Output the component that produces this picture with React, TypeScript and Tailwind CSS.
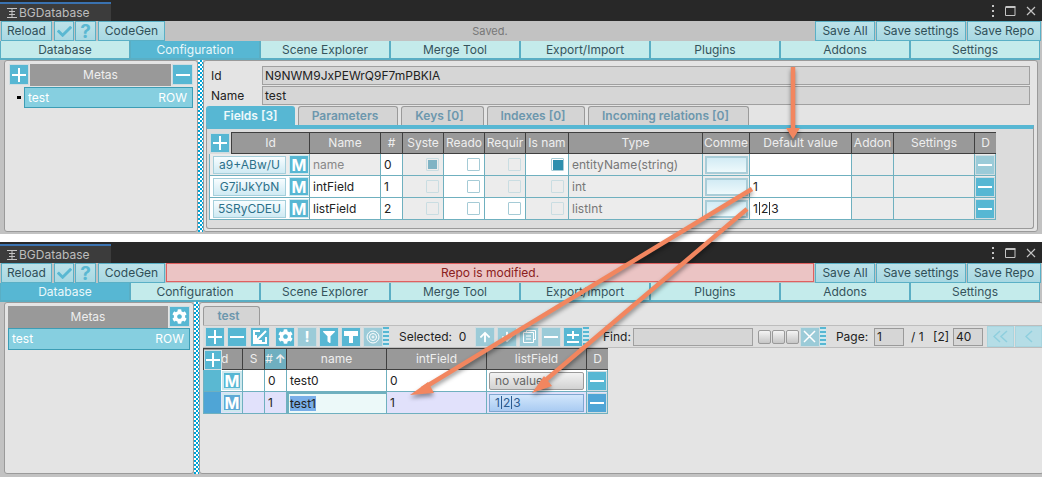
import type { ReactNode } from 'react';
import { FaCog, FaCheck, FaFilter, FaArrowUp, FaArrowDown } from 'react-icons/fa';

const mainTabs = ['Database', 'Configuration', 'Scene Explorer', 'Merge Tool', 'Export/Import', 'Plugins', 'Addons', 'Settings'];

function TitleBar() {
  return (
    <div className="h-[21px] bg-[#282828] flex justify-between shrink-0">
      <div className="w-[111px] mt-[2px] h-[19px] bg-[#3c3c3c] border-t-2 border-[#3a72b0] flex items-center pl-[6px] gap-[1px] text-[#bdbdbd] text-[12px]">
        <svg width="12" height="12" viewBox="0 0 12 12" fill="none" stroke="#c4c4c4" strokeWidth="1">
          <path d="M1 1.5h10M3 4.5h6M3 7.5h6M1 10.5h10M6 1.5v9" />
        </svg>
        <span>BGDatabase</span>
      </div>
      <div className="flex items-center pr-[6px] gap-[10px] pt-[1px]">
        <svg width="4" height="12" viewBox="0 0 4 12" fill="#c4c4c4"><path d="M1 0h2v2H1zM1 5h2v2H1zM1 10h2v2H1z" /></svg>
        <svg width="11" height="10" viewBox="0 0 11 10" fill="none" stroke="#c4c4c4"><path d="M.5 1.5h9.500v8h-9.500z" /><path d="M.5 1h10" strokeWidth="2" /></svg>
        <svg width="10" height="10" viewBox="0 0 10 10" stroke="#c4c4c4" strokeWidth="1.2"><path d="M1 1l8 8M9 1l-8 8" /></svg>
      </div>
    </div>
  );
}

function ToolBtn({ className, children }: { className: string; children: ReactNode }) {
  return (
    <div className={`h-[20px] shrink-0 border border-[#5ab0c6] bg-gradient-to-b from-[#bde2e9] to-[#a8d8e2] flex items-center justify-center text-[#2f4f58] ${className}`}>
      {children}
    </div>
  );
}

function TopBar({ children }: { children: ReactNode }) {
  return (
    <div className="h-[20px] bg-[#c2c2c2] flex shrink-0 pl-[1px] pr-[1px] gap-[1px]">
      <ToolBtn className="w-[51px]">Reload</ToolBtn>
      <ToolBtn className="w-[20px] ml-[1px]"><FaCheck size={15} color="#5ab8d2" /></ToolBtn>
      <ToolBtn className="w-[21px]"><span className="text-[#5ab8d2] font-bold text-[19px]">?</span></ToolBtn>
      <ToolBtn className="w-[67px] ml-[1px]">CodeGen</ToolBtn>
      {children}
      <ToolBtn className="w-[60px]">Save All</ToolBtn>
      <ToolBtn className="w-[90px]">Save settings</ToolBtn>
      <ToolBtn className="w-[74px]">Save Repo</ToolBtn>
    </div>
  );
}

function MainTabs({ active }: { active: number }) {
  return (
    <div className="h-[19px] bg-[#c2c2c2] flex shrink-0">
      {mainTabs.map((t, i) => (
        <div
          key={t}
          className={`w-[130px] h-[19px] pt-[1px] flex items-center justify-center border-x border-b-2 border-[#5aaec4] ${i === active ? 'bg-[#57b7d3] text-[#eaf7fa]' : 'bg-[#c4ebeb] text-[#35535c]'}`}
        >
          {t}
        </div>
      ))}
    </div>
  );
}

function Splitter() {
  return (
    <div className="w-[5px] shrink-0 bg-[repeating-conic-gradient(#00a3d6_0_25%,#ffffff_0_50%)] bg-[length:4px_4px]" />
  );
}

function Plus({ size = 14 }: { size?: number }) {
  return (
    <svg width={size} height={size} viewBox="0 0 14 14" fill="#fff"><path d="M6 0h2v6h6v2H8v6H6V8H0V6h6z" /></svg>
  );
}

function Minus() {
  return (
    <svg width="14" height="14" viewBox="0 0 14 14" fill="#fff"><path d="M0 6h14v2H0z" /></svg>
  );
}

function IconBtn({ className = '', dim = false, children }: { className?: string; dim?: boolean; children?: ReactNode }) {
  return (
    <div className={`shrink-0 border border-[#cfdde1] flex items-center justify-center ${dim ? 'bg-[#9bcbd8]' : 'bg-[#57b7d3]'} ${className}`}>
      {children}
    </div>
  );
}

function MBtn({ dim = false, thick = false }: { dim?: boolean; thick?: boolean }) {
  return (
    <div className={`w-[20px] h-[19px] shrink-0 border-[#cfe9ef] flex items-center justify-center text-white font-bold text-[16px] ${thick ? 'border-2' : 'border'} ${dim ? 'bg-[#5fa9d6]' : 'bg-[#57b7d3]'}`}>
      M
    </div>
  );
}

function Head({ className = '', children }: { className?: string; children?: ReactNode }) {
  return (
    <div className={`h-full shrink-0 bg-[#999999] border-r border-y border-[#3f3f3f] text-[#eeeeee] flex items-center justify-center overflow-hidden whitespace-nowrap ${className}`}>
      {children}
    </div>
  );
}

function Cell({ className = '', gray = false, children }: { className?: string; gray?: boolean; children?: ReactNode }) {
  return (
    <div className={`h-full shrink-0 border-r border-b border-[#6fb0bf] flex items-center ${gray ? 'bg-[#ececec]' : 'bg-white'} ${className}`}>
      {children}
    </div>
  );
}

function Check({ state = 'off' }: { state?: 'off' | 'dim' | 'on' | 'disabled' }) {
  const border = state === 'disabled' || state === 'dim' ? 'border-[#c9dde2]' : 'border-[#a5cbd6]';
  return (
    <div className={`w-[13px] h-[13px] border rounded-[1px] flex items-center justify-center ${border}`}>
      {state === 'dim' && <div className="w-[9px] h-[9px] bg-[#7fb3c4]" />}
      {state === 'on' && <div className="w-[10px] h-[10px] bg-[#2d8fae]" />}
    </div>
  );
}

function IdBtn({ children }: { children: ReactNode }) {
  return (
    <div className="w-[73px] h-[18px] ml-[3px] mr-[3px] shrink-0 border border-[#a5cfdb] bg-gradient-to-b from-[#f8fdff] to-[#cfeaf3] text-[#2c7089] flex items-center justify-center">
      {children}
    </div>
  );
}

function Comment() {
  return <div className="w-[43px] h-[18px] mx-auto border-2 border-[#a9cdd8] bg-gradient-to-b from-[#d2ebf4] to-[#eef9fb]" />;
}

type FieldRow = {
  id: string;
  name: string;
  n: number;
  type: string;
  def: ReactNode;
  system: 'dim' | 'disabled';
  required: 'disabled' | 'off';
  isName: 'on' | 'disabled';
};

const pipes = (color: string) => (
  <>1<span className={`mx-[1px] w-px h-[13px] inline-block align-middle ${color}`} />2<span className={`mx-[1px] w-px h-[13px] inline-block align-middle ${color}`} />3</>
);

const fieldRows: FieldRow[] = [
  { id: 'a9+ABw/U', name: 'name', n: 0, type: 'entityName(string)', def: '', system: 'dim', required: 'disabled', isName: 'on' },
  { id: 'G7jlJkYbN', name: 'intField', n: 1, type: 'int', def: '1', system: 'disabled', required: 'disabled', isName: 'disabled' },
  { id: '5SRyCDEU', name: 'listField', n: 2, type: 'listInt', def: pipes('bg-[#333333]'), system: 'disabled', required: 'off', isName: 'disabled' },
];

function FieldsTable() {
  return (
    <div className="ml-[2px] mt-[3px] w-[787px]">
      <div className="h-[22px] flex">
        <div className="w-[22px] h-full shrink-0 flex items-center justify-center">
          <IconBtn className="w-[20px] h-[20px]"><Plus /></IconBtn>
        </div>
        <Head className="w-[79px] border-l">Id</Head>
        <Head className="w-[71px]">Name</Head>
        <Head className="w-[22px]">#</Head>
        <Head className="w-[41px]">Syste</Head>
        <Head className="w-[41px]">Reado</Head>
        <Head className="w-[41px]">Requir</Head>
        <Head className="w-[43px]">Is nam</Head>
        <Head className="w-[134px]">Type</Head>
        <Head className="w-[47px]">Comme</Head>
        <Head className="w-[102px]">Default value</Head>
        <Head className="w-[42px]">Addon</Head>
        <Head className="w-[81px]">Settings</Head>
        <Head className="w-[21px] border-r-0">D</Head>
      </div>
      {fieldRows.map((r, i) => (
        <div key={r.id} className="h-[22px] flex text-[#222222]">
          <Cell className="w-[101px] border-l" gray={i === 0}>
            <IdBtn>{r.id}</IdBtn>
            <MBtn />
          </Cell>
          <Cell className={`w-[71px] pl-[3px] ${i === 0 ? 'text-[#888888]' : ''}`} gray={i === 0}>{r.name}</Cell>
          <Cell className="w-[22px] pl-[3px]">{r.n}</Cell>
          <Cell className="w-[41px] justify-end pr-[4px]" gray><Check state={r.system} /></Cell>
          <Cell className="w-[41px] justify-end pr-[4px]"><Check /></Cell>
          <Cell className="w-[41px] justify-end pr-[4px]" gray={r.required === 'disabled'}><Check state={r.required} /></Cell>
          <Cell className="w-[43px] justify-end pr-[4px]" gray={i > 0}><Check state={r.isName} /></Cell>
          <Cell className="w-[134px] pl-[3px] text-[#777777]" gray>{r.type}</Cell>
          <Cell className="w-[47px]" gray><Comment /></Cell>
          <Cell className="w-[102px] pl-[3px]">{r.def}</Cell>
          <Cell className="w-[42px]" gray />
          <Cell className="w-[81px]" gray />
          <Cell className="w-[21px] justify-center" gray>
            <IconBtn className="w-[20px] h-[20px]" dim={i === 0}><Minus /></IconBtn>
          </Cell>
        </div>
      ))}
    </div>
  );
}

function SubTab({ className, active = false, children }: { className: string; active?: boolean; children: ReactNode }) {
  return (
    <div className={`h-[19px] shrink-0 rounded-t-[3px] flex items-center justify-center font-semibold ${active ? 'bg-[#57b7d3] text-[#eef9fb]' : 'border border-[#9a9a9a] border-b-0 bg-[#d4d4d4] text-[#6c97ad] pr-[6px]'} ${className}`}>
      {children}
    </div>
  );
}

function ConfigWindow() {
  return (
    <div className="h-[234px] flex flex-col bg-[#c2c2c2]">
      <TitleBar />
      <TopBar>
        <div className="flex-1 flex items-center justify-center text-[#777777] text-[11px]">Saved.</div>
      </TopBar>
      <MainTabs active={1} />
      <div className="flex-1 flex pl-[4px] pb-[2px] min-h-0">
        <div className="w-[194px] shrink-0 bg-[#e4e4e4] border border-[#9a9a9a] rounded-[3px] px-[4px] py-[3px]">
          <div className="h-[22px] flex gap-[1px]">
            <IconBtn className="w-[20px] h-[21px]"><Plus /></IconBtn>
            <div className="flex-1 bg-[#999999] text-[#eeeeee] flex items-center justify-center">Metas</div>
            <IconBtn className="w-[21px] h-[21px]"><Minus /></IconBtn>
          </div>
          <div className="flex items-center mt-px">
            <div className="ml-[8px] w-[4px] h-[3px] bg-black shrink-0" />
            <div className="ml-[3px] flex-1 h-[21px] bg-[#86cfe0] border border-[#3d9db5] flex items-center justify-between pl-[3px] pr-[5px] text-white">
              <span>test</span>
              <span>ROW</span>
            </div>
          </div>
        </div>
        <Splitter />
        <div className="w-[835px] shrink-0 bg-[#e4e4e4] border border-[#9a9a9a] rounded-[3px] px-[2px] py-[5px]">
          <div className="flex items-center h-[19px] pl-[5px] text-[#222222]">
            <span className="w-[51px]">Id</span>
            <div className="w-[768px] h-[19px] bg-[#d6d6d6] border border-[#a0a0a0] pl-[2px] flex items-center">N9NWM9JxPEWrQ9F7mPBKIA</div>
          </div>
          <div className="flex items-center h-[19px] mt-px pl-[5px] text-[#222222]">
            <span className="w-[51px]">Name</span>
            <div className="w-[768px] h-[19px] bg-[#d6d6d6] border border-[#a0a0a0] pl-[2px] flex items-center">test</div>
          </div>
          <div className="flex h-[19px] mt-[1px] gap-[3px]">
            <SubTab className="w-[89px]" active>Fields [3]</SubTab>
            <SubTab className="w-[100px]">Parameters</SubTab>
            <SubTab className="w-[83px]">Keys [0]</SubTab>
            <SubTab className="w-[98px]">Indexes [0]</SubTab>
            <SubTab className="w-[161px]">Incoming relations [0]</SubTab>
          </div>
          <div className="w-[828px] h-[104px] border-t-[4px] border-[#57b7d3] border-x border-b border-x-[#9a9a9a] border-b-[#9a9a9a] bg-[#dcdcdc] rounded-b-[3px]">
            <FieldsTable />
          </div>
        </div>
      </div>
    </div>
  );
}

function Grip() {
  return (
    <div className="w-[6px] h-[20px] shrink-0 bg-[repeating-linear-gradient(180deg,#57b7d3_0_2px,#cfe9ef_2px_4px)]" />
  );
}

function DataToolbar() {
  return (
    <div className="h-[23px] w-[840px] bg-[#dedede] border-y border-[#bdbdbd] flex items-center text-[#222222] pl-[2px] overflow-hidden">
      <IconBtn className="w-[20px] h-[20px]"><Plus /></IconBtn>
      <IconBtn className="w-[20px] h-[20px] ml-[2px]"><Minus /></IconBtn>
      <IconBtn className="w-[20px] h-[20px] ml-[3px]">
        <svg width="14" height="14" viewBox="0 0 14 14" fill="none" stroke="#fff" strokeWidth="2"><path d="M13 1L4 10M3 5v6h6M7 1H1v12h12V7" /></svg>
      </IconBtn>
      <IconBtn className="w-[20px] h-[20px] ml-[5px]"><FaCog size={15} color="#fff" /></IconBtn>
      <IconBtn className="w-[20px] h-[20px] ml-[2px]" dim><span className="text-white font-bold text-[15px]">!</span></IconBtn>
      <IconBtn className="w-[20px] h-[20px] ml-[2px]"><FaFilter size={12} color="#fff" /></IconBtn>
      <IconBtn className="w-[20px] h-[20px] ml-[2px]">
        <svg width="14" height="12" viewBox="0 0 14 12" fill="#fff"><path d="M0 0h14v5H9v7H5V5H0z" /></svg>
      </IconBtn>
      <IconBtn className="w-[20px] h-[20px] ml-[2px]" dim>
        <svg width="14" height="14" viewBox="0 0 14 14" fill="none" stroke="#fff"><circle cx="7" cy="7" r="6" /><circle cx="7" cy="7" r="3.500" /><circle cx="7" cy="7" r="1" /></svg>
      </IconBtn>
      <Grip />
      <span className="ml-[10px] w-[68px] whitespace-pre">Selected:  0</span>
      <IconBtn className="w-[20px] h-[20px] ml-[8px]" dim><FaArrowUp size={12} color="#fff" /></IconBtn>
      <IconBtn className="w-[20px] h-[20px] ml-[2px]" dim><FaArrowDown size={12} color="#fff" /></IconBtn>
      <IconBtn className="w-[20px] h-[20px] ml-[2px]" dim>
        <svg width="13" height="13" viewBox="0 0 13 13" fill="none" stroke="#fff"><path d="M3.500 2.500v-2h9v9h-2M.5 2.500h10v10H.5zM3 6h5M3 9h5" /></svg>
      </IconBtn>
      <IconBtn className="w-[20px] h-[20px] ml-[2px]" dim><Minus /></IconBtn>
      <IconBtn className="w-[20px] h-[20px] ml-[2px]">
        <svg width="12" height="14" viewBox="0 0 12 14" fill="#fff"><path d="M5 1h2v3h5v2H7v3H5V6H0V4h5zM0 11h12v2H0z" /></svg>
      </IconBtn>
      <Grip />
      <span className="ml-[14px]">Find:</span>
      <div className="w-[120px] h-[18px] ml-[2px] bg-[#d6d6d6] border border-[#a0a0a0]" />
      <div className="flex gap-[1px] ml-[5px]">
        <div className="w-[13px] h-[14px] rounded-[2px] border border-[#9a9a9a] bg-gradient-to-b from-[#f4f4f4] to-[#c6c6c6]" />
        <div className="w-[13px] h-[14px] rounded-[2px] border border-[#9a9a9a] bg-gradient-to-b from-[#f4f4f4] to-[#c6c6c6]" />
        <div className="w-[13px] h-[14px] rounded-[2px] border border-[#9a9a9a] bg-gradient-to-b from-[#f4f4f4] to-[#c6c6c6]" />
      </div>
      <IconBtn className="w-[20px] h-[20px] ml-[1px]" dim>
        <svg width="13" height="13" viewBox="0 0 13 13" stroke="#fff" strokeWidth="1.500"><path d="M1 1l11 11M12 1L1 12" /></svg>
      </IconBtn>
      <Grip />
      <span className="ml-[10px]">Page:</span>
      <div className="w-[30px] h-[18px] ml-[6px] bg-[#d6d6d6] border border-[#9a9a9a] pl-[2px] flex items-center">1</div>
      <span className="ml-[7px] w-[22px]">/ 1</span>
      <span className="w-[20px]">[2]</span>
      <div className="w-[30px] h-[18px] bg-[#d6d6d6] border border-[#9a9a9a] pl-[2px] flex items-center">40</div>
      <div className="w-[27px] h-[21px] ml-[4px] shrink-0 border border-[#a9d5df] bg-[#b5dde6] flex items-center justify-center text-[#e9f6f9]">
        <svg width="15" height="13" viewBox="0 0 15 13" fill="none" stroke="#8fcfde" strokeWidth="1.500"><path d="M7 1L1 6.500 7 12M14 1L8 6.500 14 12" /></svg>
      </div>
      <div className="w-[27px] h-[21px] ml-[1px] shrink-0 border border-[#a9d5df] bg-[#b5dde6] flex items-center justify-center">
        <svg width="8" height="13" viewBox="0 0 8 13" fill="none" stroke="#8fcfde" strokeWidth="1.500"><path d="M7 1L1 6.500 7 12" /></svg>
      </div>
    </div>
  );
}

function DataTable() {
  return (
    <div className="relative w-[405px]">
      <div className="h-[22px] flex">
        <Head className="w-[40px] border-l">Id</Head>
        <Head className="w-[22px]">S</Head>
        <Head className="w-[22px] !bg-[#6fafc0] gap-[2px]">#<span className="text-[12px] font-bold">↑</span></Head>
        <Head className="w-[100px]">name</Head>
        <Head className="w-[100px]">intField</Head>
        <Head className="w-[100px]">listField</Head>
        <Head className="w-[21px] border-r-0">D</Head>
      </div>
      <div className="h-[22px] flex text-[#222222]">
        <Cell className="w-[40px] border-l">
          <div className="w-[17px] h-full bg-[#5ab8d2]" />
          <div className="ml-[1px]"><MBtn thick /></div>
        </Cell>
        <Cell className="w-[22px]" />
        <Cell className="w-[22px] pl-[3px]">0</Cell>
        <Cell className="w-[100px] pl-[3px]">test0</Cell>
        <Cell className="w-[100px] pl-[3px]">0</Cell>
        <Cell className="w-[100px] pl-[2px]">
          <div className="w-[95px] h-[18px] bg-gradient-to-b from-[#f2f2f2] to-[#d2d2d2] border border-[#9a9a9a] rounded-[2px] pl-[5px] text-[#666666] flex items-center">no value</div>
        </Cell>
        <Cell className="w-[21px] justify-center"><IconBtn className="w-[20px] h-[20px]"><Minus /></IconBtn></Cell>
      </div>
      <div className="h-[22px] flex text-[#222222]">
        <Cell className="w-[40px] border-l !bg-[#e1e1fb]">
          <div className="w-[17px] h-full bg-[#4fa5d6]" />
          <div className="ml-[1px]"><MBtn dim thick /></div>
        </Cell>
        <Cell className="w-[22px] !bg-[#e1e1fb]" />
        <Cell className="w-[22px] pl-[3px] !bg-[#e1e1fb]">1</Cell>
        <Cell className="w-[100px] pl-[1px] !bg-[#ecf9f9] border-2 border-[#5fb0c5]">
          <span className="bg-[#79aee8] leading-[15px]">test1</span>
        </Cell>
        <Cell className="w-[100px] pl-[3px] !bg-[#e1e1fb]">1</Cell>
        <Cell className="w-[100px] pl-[2px] !bg-[#e1e1fb]">
          <div className="w-[95px] h-[18px] bg-gradient-to-b from-[#d2e6fb] to-[#a9cbf2] border border-[#7fa7d0] pl-[5px] text-[#2b5b8f] flex items-center">{pipes('bg-[#2b5b8f]')}</div>
        </Cell>
        <Cell className="w-[21px] justify-center !bg-[#e1e1fb]"><IconBtn className="w-[20px] h-[20px] !bg-[#4fa5d6]"><Minus /></IconBtn></Cell>
      </div>
      <IconBtn className="absolute left-[1px] top-[2px] w-[18px] h-[20px] border-[#7fb6c6]"><Plus /></IconBtn>
    </div>
  );
}

function DataWindow() {
  return (
    <div className="h-[235px] flex flex-col bg-[#c2c2c2]">
      <TitleBar />
      <TopBar>
        <div className="flex-1 h-[19px] bg-[#ebc4c4] border border-[#e06060] flex items-center justify-center text-[#8a2020]">Repo is modified.</div>
      </TopBar>
      <MainTabs active={0} />
      <div className="flex-1 flex pl-[4px] pb-[3px] min-h-0">
        <div className="w-[190px] shrink-0 bg-[#e4e4e4] border border-[#9a9a9a] rounded-[3px] px-[3px] py-[3px]">
          <div className="h-[22px] flex gap-[1px]">
            <div className="w-[160px] bg-[#999999] text-[#eeeeee] flex items-center justify-center">Metas</div>
            <IconBtn className="w-[21px] h-[21px]"><FaCog size={15} color="#fff" /></IconBtn>
          </div>
          <div className="h-[22px] bg-[#86cfe0] border border-[#3d9db5] flex items-center justify-between pl-[3px] pr-[5px] text-white">
            <span>test</span>
            <span>ROW</span>
          </div>
        </div>
        <Splitter />
        <div className="flex-1 bg-[#e4e4e4] border border-[#9a9a9a] rounded-[3px] pl-[3px] pt-[3px]">
          <div className="w-[57px] h-[19px] pr-[6px] rounded-t-[3px] border border-b-0 border-[#9a9a9a] bg-[#d4d4d4] text-[#6c97ad] font-semibold flex items-center justify-center">test</div>
          <DataToolbar />
          <DataTable />
        </div>
      </div>
    </div>
  );
}

function Arrows() {
  return (
    <svg
      className="absolute inset-0 drop-shadow-[0_3px_2px_rgba(0,0,0,0.4)]"
      width="1042"
      height="477"
      viewBox="0 0 1042 477"
    >
      <g stroke="#f2865f" strokeWidth="4.500" fill="#f2865f">
        <path d="M793 67V130" />
        <path d="M752 189L422 389" />
        <path d="M747 209L541 384" />
      </g>
      <g fill="#f2865f">
        <path d="M786 128h14l-7 11z" />
        <path d="M410 395L428 382l6 11z" />
        <path d="M532 393L544 376l8 10z" />
      </g>
    </svg>
  );
}

export default function App() {
  return (
    <div className="relative w-[1042px] h-[477px] overflow-hidden bg-white font-['Inter',sans-serif] text-[12px] leading-none">
      <ConfigWindow />
      <div className="h-[8px]" />
      <DataWindow />
      <Arrows />
    </div>
  );
}
